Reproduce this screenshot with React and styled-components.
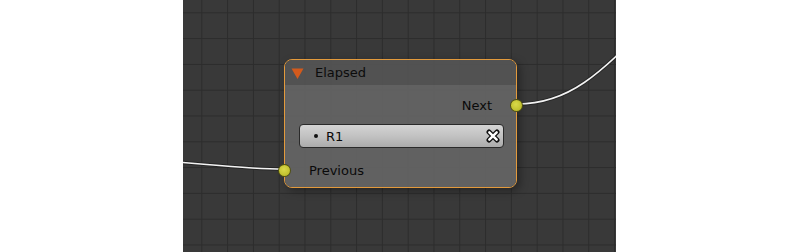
import React from "react";
import styled, { createGlobalStyle } from "styled-components";

const Global = createGlobalStyle`
  html, body { margin: 0; padding: 0; background: #ffffff; }
  body { font-family: "DejaVu Sans", "Liberation Sans", sans-serif; }
`;

const Page = styled.div`
  display: flex;
  width: 800px;
  height: 252px;
  background: #ffffff;
  padding-left: 183px;
  box-sizing: border-box;
`;

const Canvas = styled.div`
  position: relative;
  width: 433px;
  height: 252px;
  overflow: hidden;
  background-color: #393939;
  background-image:
    linear-gradient(to right, #2c2c2c 0, #2c2c2c 1px, transparent 1px),
    linear-gradient(to bottom, #2c2c2c 0, #2c2c2c 1px, transparent 1px);
  background-size: 25.8px 25.8px;
  background-position: 18.3px 12.3px;
`;

const Wires = styled.svg`
  position: absolute;
  left: 0;
  top: 0;
  width: 433px;
  height: 252px;
  overflow: visible;
`;

const Node = styled.div`
  position: absolute;
  left: ${(p) => p.$x}px;
  top: ${(p) => p.$y}px;
  width: ${(p) => p.$w}px;
  height: 129px;
  box-sizing: border-box;
  border: 1px solid #e39a3c;
  border-radius: 8px;
  display: flex;
  flex-direction: column;
  box-shadow: 3px 3px 8px rgba(0, 0, 0, 0.35);
`;

const Header = styled.div`
  height: 25px;
  display: flex;
  align-items: center;
  gap: 11px;
  padding-left: 6px;
  background: rgba(84, 84, 84, 0.93);
  border-radius: 7px 7px 0 0;
  color: #0c0c0c;
  font-size: 13px;
`;

const Body = styled.div`
  flex: 1;
  display: flex;
  flex-direction: column;
  padding: 9px 12px 6px 14px;
  background: rgba(100, 100, 100, 0.93);
  border-radius: 0 0 7px 7px;
`;

const Row = styled.div`
  position: relative;
  height: 22px;
  display: flex;
  align-items: center;
  justify-content: ${(p) => (p.$right ? "flex-end" : "flex-start")};
  padding: ${(p) => (p.$right ? "0 12px 0 0" : "0 0 0 10px")};
  margin-top: ${(p) => p.$mt || 0}px;
  color: #0a0a0a;
  font-size: 13px;
`;

const Socket = styled.span`
  position: absolute;
  top: 50%;
  ${(p) => (p.$side === "right" ? "right: -19px;" : "left: -21px;")}
  width: 11px;
  height: 11px;
  margin-top: -6px;
  border-radius: 50%;
  background: radial-gradient(circle at 45% 40%, #d9d94a 0%, #c3c331 60%, #a9a927 100%);
  border: 1px solid rgba(20, 20, 0, 0.65);
`;

const Field = styled.div`
  height: 24px;
  box-sizing: border-box;
  margin-top: 8px;
  display: flex;
  align-items: center;
  padding: 0 3px 0 14px;
  border: 1px solid #2a2a2a;
  border-radius: 4px;
  background: linear-gradient(to bottom, #d4d4d4 0%, #c0c0c0 55%, #ababab 100%);
  color: #0a0a0a;
  font-size: 13px;
`;

const Bullet = styled.span`
  width: 4px;
  height: 4px;
  border-radius: 50%;
  background: #111;
  margin-right: 8px;
  margin-top: -1px;
`;

const FieldText = styled.span`
  flex: 1;
`;

const Triangle = () => (
  <svg width="13" height="12" viewBox="0 0 13 12">
    <polygon points="0.5,1.5 12.5,1.5 6.5,12" fill="#d35a1c" />
  </svg>
);

const ClearIcon = () => (
  <svg width="14" height="14" viewBox="0 0 14 14">
    <path d="M3 3 L11 11 M11 3 L3 11" stroke="#111" strokeWidth="5" strokeLinecap="round" />
    <path d="M3.3 3.3 L10.7 10.7 M10.7 3.3 L3.3 10.7" stroke="#ffffff" strokeWidth="2.4" strokeLinecap="round" />
  </svg>
);

const Wire = ({ d }) => (
  <g fill="none">
    <path d={d} stroke="#262626" strokeWidth="3.4" />
    <path d={d} stroke="#f4f4f4" strokeWidth="1.6" />
  </g>
);

export default function App() {
  return (
    <>
      <Global />
      <Page>
        <Canvas>
          <Wires viewBox="0 0 433 252">
            <Wire d="M -80 158 C 0 160 50 169 101 169" />
            <Wire d="M 334 104 C 390 104 420 70 480 10" />
          </Wires>
          <Node $x={101} $y={59} $w={233}>
            <Header>
              <Triangle />
              <span>Elapsed</span>
            </Header>
            <Body>
              <Row $right>
                Next
                <Socket $side="right" />
              </Row>
              <Field>
                <Bullet />
                <FieldText>R1</FieldText>
                <ClearIcon />
              </Field>
              <Row $mt={11}>
                Previous
                <Socket $side="left" />
              </Row>
            </Body>
          </Node>
        </Canvas>
      </Page>
    </>
  );
}
